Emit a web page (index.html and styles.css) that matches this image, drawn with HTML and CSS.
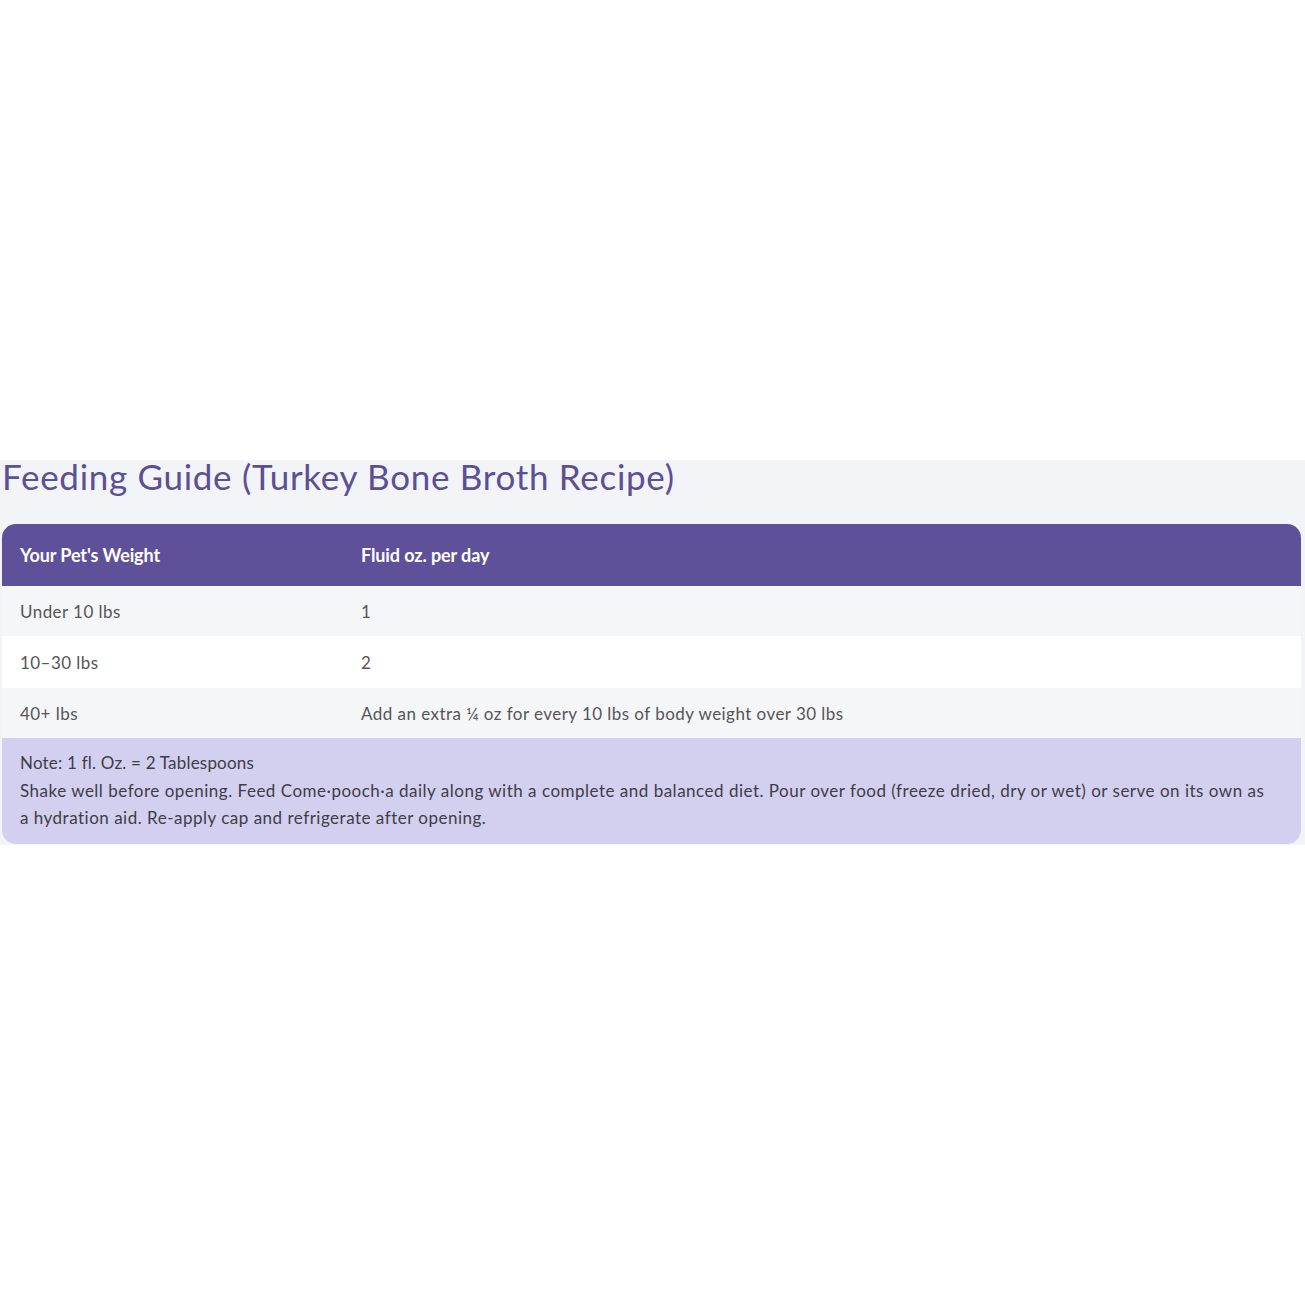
FILE: index.html
```html
<!DOCTYPE html>
<html>
<head>
<meta charset="utf-8">
<link rel="stylesheet" href="styles.css">
</head>
<body>
<div class="top-space"></div>
<section class="guide">
  <h2 class="guide-title">Feeding Guide (Turkey Bone Broth Recipe)</h2>
  <div class="table">
    <div class="row head">
      <div class="c1">Your Pet's Weight</div>
      <div class="c2">Fluid oz. per day</div>
    </div>
    <div class="row alt">
      <div class="c1">Under 10 lbs</div>
      <div class="c2">1</div>
    </div>
    <div class="row plain">
      <div class="c1">10–30 lbs</div>
      <div class="c2">2</div>
    </div>
    <div class="row alt">
      <div class="c1">40+ lbs</div>
      <div class="c2">Add an extra ¼ oz for every 10 lbs of body weight over 30 lbs</div>
    </div>
    <div class="note">
      <p class="note-head">Note: 1 fl. Oz. = 2 Tablespoons</p>
      <p>Shake well before opening. Feed Come·pooch·a daily along with a complete and balanced diet. Pour over food (freeze dried, dry or wet) or serve on its own as a hydration aid. Re-apply cap and refrigerate after opening.</p>
    </div>
  </div>
</section>
</body>
</html>
```

FILE: styles.css
```css
html, body {
  margin: 0;
  padding: 0;
  background: #ffffff;
}
body {
  font-family: Lato, "Open Sans", sans-serif;
}
.top-space {
  height: 460px;
}
.guide {
  background: #f3f4f8;
  padding: 0 4px 1px 2px;
}
.guide-title {
  margin: 0;
  height: 64px;
  font-size: 35px;
  line-height: 33px;
  font-weight: 400;
  color: #5b4f96;
  letter-spacing: 0.7px;
}
.table {
  border-radius: 14px;
  overflow: hidden;
}
.row {
  display: flex;
  align-items: center;
  font-size: 17px;
  letter-spacing: 0.45px;
  color: #555459;
}
.c1 {
  width: 341px;
  padding-left: 18px;
  flex: none;
}
.c2 {
  flex: 1;
}
.head {
  height: 62px;
  background: #5e5199;
  color: #ffffff;
  font-weight: 700;
  font-size: 18px;
  letter-spacing: -0.1px;
}
.alt {
  height: 50px;
  background: #f5f6f8;
}
.plain {
  height: 52px;
  background: #ffffff;
}
.alt:last-of-type {
  height: 49px;
}
.note {
  background: #d3cfee;
  padding: 11px 30px 12px 18px;
  color: #3e3d48;
  font-size: 17px;
  letter-spacing: 0.5px;
  line-height: 27.5px;
}
.note p {
  margin: 0;
}
.note .note-head {
  letter-spacing: 0.2px;
}
```
